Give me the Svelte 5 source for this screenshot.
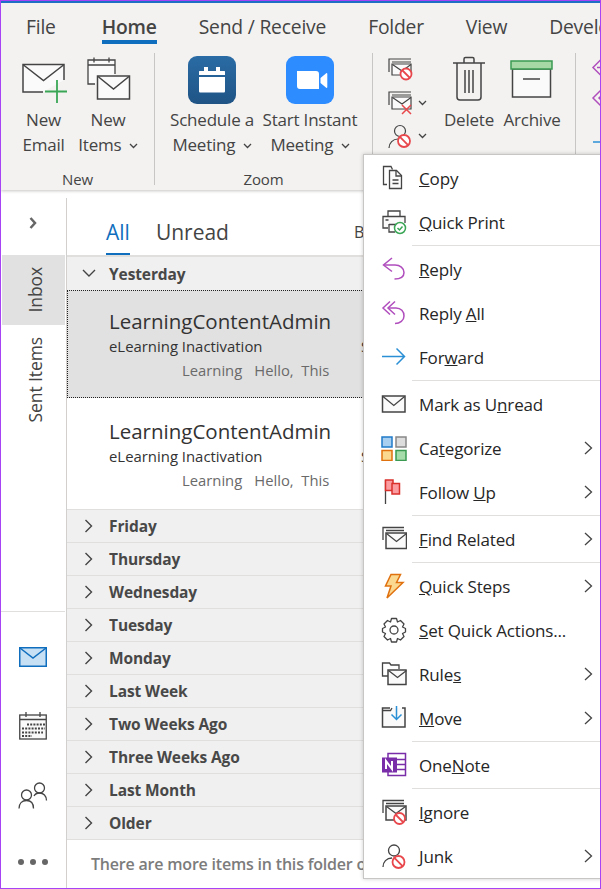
<script>
  const tabs = ['File', 'Home', 'Send / Receive', 'Folder', 'View', 'Developer'];

  const collapsed = ['Friday', 'Thursday', 'Wednesday', 'Tuesday', 'Monday', 'Last Week', 'Two Weeks Ago', 'Three Weeks Ago', 'Last Month', 'Older'];

  // pre / key / post: key is the underlined access key letter
  const menu = [
    [
      { icon: 'copy', pre: '', key: 'C', post: 'opy' },
      { icon: 'print', pre: '', key: 'Q', post: 'uick Print' }
    ],
    [
      { icon: 'reply', pre: '', key: 'R', post: 'eply' },
      { icon: 'replyall', pre: 'Reply ', key: 'A', post: 'll' },
      { icon: 'forward', pre: 'For', key: 'w', post: 'ard' }
    ],
    [
      { icon: 'mail', pre: 'Mark as U', key: 'n', post: 'read' },
      { icon: 'cat', pre: 'Ca', key: 't', post: 'egorize', more: true },
      { icon: 'flag', pre: 'Follow ', key: 'U', post: 'p', more: true }
    ],
    [{ icon: 'find', pre: '', key: 'F', post: 'ind Related', more: true }],
    [
      { icon: 'bolt', pre: '', key: 'Q', post: 'uick Steps', more: true },
      { icon: 'gear', pre: '', key: 'S', post: 'et Quick Actions...' },
      { icon: 'rules', pre: 'Rule', key: 's', post: '', more: true },
      { icon: 'move', pre: '', key: 'M', post: 'ove', more: true }
    ],
    [{ icon: 'onenote', pre: 'One', key: 'N', post: 'ote' }],
    [
      { icon: 'ignore', pre: '', key: 'I', post: 'gnore' },
      { icon: 'junk', pre: '', key: 'J', post: 'unk', more: true }
    ]
  ];
</script>

{#snippet noEntry(x, y, r)}
  <circle cx={x} cy={y} {r} fill="#fff" stroke="#e8474c" stroke-width="1.8" />
  <path d="M{x - r * 0.68} {y - r * 0.68}L{x + r * 0.68} {y + r * 0.68}" stroke="#e8474c" stroke-width="1.8" />
{/snippet}

{#snippet caret()}
  <svg class="caret" width="9" height="6" viewBox="0 0 9 6"><path d="M1 1l3.5 3.5L8 1" fill="none" stroke="#444" stroke-width="1.3" /></svg>
{/snippet}

{#snippet menuIcon(name)}
  <svg width="26" height="26" viewBox="0 0 26 26" fill="none" stroke="#444" stroke-width="1.3">
    {#if name === 'copy'}
      <path d="M6 19.500H2.500V1.500H10l1.500 3" />
      <path d="M8.500 5.500h7l5 5v13h-12z" fill="#fafafa" /><path d="M15 5.500v5.500h5.500M11.500 15h6M11.500 18.500h6" />
    {:else if name === 'print'}
      <path d="M7 7V2h12v5" /><path d="M7 19H2V7.500h22V14" fill="#fafafa" /><path d="M4.500 11h3M8 15.500h7M8 15v8h6" />
      <circle cx="19" cy="19" r="5.500" fill="#fff" stroke="#3aa655" stroke-width="1.500" /><path d="M16.500 19l2 2 3-3.500" stroke="#3aa655" stroke-width="1.500" />
    {:else if name === 'reply'}
      <path d="M11 2L2.500 9l8.500 6.500" stroke="#b04dbd" stroke-width="1.500" /><path d="M3 9h11c5 0 9 3 9 7.500S19 23 13.500 23" stroke="#b04dbd" stroke-width="1.500" />
    {:else if name === 'replyall'}
      <path d="M9 1.500L2 8l7 6.500" stroke="#b04dbd" stroke-width="1.500" /><path d="M14 1.500L7 8l7 6.500" stroke="#b04dbd" stroke-width="1.500" /><path d="M8 8h7c5 0 8 3.500 8 8s-4 7.500-9 7.500" stroke="#b04dbd" stroke-width="1.500" />
    {:else if name === 'forward'}
      <path d="M1 12.500h22M15.500 4.500l8 8-8 8" stroke="#2b8fd6" stroke-width="1.500" />
    {:else if name === 'mail'}
      <path d="M1.500 5h22.500v16H1.500z" fill="#fafafa" stroke-width="1.500" /><path d="M2 5.500l10.800 9 10.800-9" />
    {:else if name === 'cat'}
      <rect x="1" y="2" width="10" height="10" fill="#a9cff0" stroke="#1f7bc8" stroke-width="1.500" />
      <rect x="15" y="2" width="10" height="10" fill="#ddd" stroke="#888" stroke-width="1.500" />
      <rect x="1" y="15.500" width="10" height="10" fill="#fbd88f" stroke="#e0710f" stroke-width="1.500" />
      <rect x="15" y="15.500" width="10" height="10" fill="#a6dca9" stroke="#3a9a52" stroke-width="1.500" />
    {:else if name === 'flag'}
      <path d="M4.500 1v24" /><rect x="4.500" y="1" width="7.500" height="10.500" fill="#fb9ca0" stroke="#d9302c" stroke-width="1.500" />
      <rect x="11" y="4.500" width="7.500" height="10.500" fill="#fb9ca0" stroke="#d9302c" stroke-width="1.500" />
    {:else if name === 'find'}
      <path d="M2 14V1.500h21M5 4.500h18" /><path d="M5 7h20.500v15.500H5z" fill="#fafafa" stroke-width="1.500" /><path d="M5.500 7.500l10 8 10-8" />
    {:else if name === 'bolt'}
      <path d="M10 1.500h9.500l-4 8h6.500L6 25l4-12H4.500z" fill="#fbd88f" stroke="#e0710f" stroke-width="1.500" />
    {:else if name === 'gear'}
      <path d="M10.500 1.500h5l1 3.500 3-1.500 3.500 3.500-1.500 3 3 1.500v3.500l-3 1.500 1.500 3-3.500 3.500-3-1.500-1 3.500h-5l-1-3.500-3 1.500L3 19.500l1.500-3-3-1.500v-3.500l3-1.500L3 7l3.500-3.500 3 1.500z" stroke-linejoin="round" />
      <circle cx="13" cy="13" r="4" />
    {:else if name === 'rules'}
      <path d="M7 15H1.500V2h7l1.500 2h8v4" /><path d="M7 9h18v14.500H7z" fill="#fafafa" stroke-width="1.500" /><path d="M7.500 9.500l9 7 9-7" />
    {:else if name === 'move'}
      <path d="M9 3H1.500v19h22.500V3h-3" fill="#fafafa" stroke-width="1.500" /><path d="M1.500 5.500h8l1.500-2.500" />
      <path d="M15.500 1v13M10.500 9.500l5 5 5-5" stroke="#2b8fd6" stroke-width="1.500" />
    {:else if name === 'onenote'}
      <path d="M7 1.500h17.500v22H7z" fill="#fff" stroke="#7a2da8" stroke-width="1.500" /><path d="M16 7.500h9M16 12.500h9M16 17.500h9" stroke="#7a2da8" stroke-width="1.500" />
      <rect x="1" y="5.500" width="15" height="15" fill="#7a2da8" stroke="none" />
      <path d="M5 17V9l6 8V9" stroke="#fff" stroke-width="2" />
    {:else if name === 'ignore'}
      <path d="M2 14V1.500h21M5 4.500h18" /><path d="M5 7h20v14H5z" fill="#fafafa" stroke-width="1.500" /><path d="M5.500 7.500l9.500 7 9.500-7" />
      {@render noEntry(18.500, 19.500, 5.500)}
    {:else if name === 'junk'}
      <circle cx="13" cy="7.500" r="5.500" /><path d="M2 24c0-5 3.500-9 9-9" />
      {@render noEntry(17.500, 19, 6)}
    {/if}
  </svg>
{/snippet}

<div class="window">
  <header class="ribbon">
    <nav class="tabs">
      {#each tabs as tab}
        <span class="tab" class:active={tab === 'Home'}>{tab}</span>
      {/each}
    </nav>

    <div class="groups">
      <section class="group g-new">
        <div class="tools">
          <div class="tool t-new">
            <svg width="46" height="48" viewBox="0 0 46 48" fill="none" stroke="#444" stroke-width="1.500">
              <path d="M43 24V8.500H2v27.500h20" fill="#fafafa" />
              <path d="M2.500 9l20 15.500L42.500 9" />
              <path d="M36 24v23M24 35.500h23" stroke="#3aa655" stroke-width="1.800" />
            </svg>
            <span>New<br />Email</span>
          </div>
          <div class="tool t-items">
            <svg width="46" height="48" viewBox="0 0 46 48" fill="none" stroke="#444" stroke-width="1.300">
              <path d="M10 28H3V4h27v14" fill="#fafafa" /><path d="M3 9h27M9 1.500v5M24 1.500v5" />
              <path d="M12.500 20h32v23h-32z" fill="#fafafa" stroke-width="1.500" /><path d="M13 20.500L28.500 33 44 20.500" stroke-width="1.500" />
            </svg>
            <span>New<br />Items {@render caret()}</span>
          </div>
        </div>
        <div class="label">New</div>
      </section>

      <section class="group g-zoom">
        <div class="tools">
          <div class="tool t-sched">
            <svg width="48" height="48" viewBox="0 0 48 48">
              <defs><linearGradient id="sq" x1="0" y1="0" x2="0" y2="1"><stop offset="0" stop-color="#2a6ca5" /><stop offset="1" stop-color="#1f5485" /></linearGradient></defs>
              <rect width="48" height="48" rx="9" fill="url(#sq)" />
              <path d="M12 15h4v-4h4v4h8v-4h4v4h4c1 0 1 .5 1 1v3H11v-3c0-.5 0-1 1-1zM11 21h26v14c0 1-.5 1.500-1.500 1.500h-23c-1 0-1.500-.5-1.500-1.500z" fill="#fff" />
            </svg>
            <span>Schedule a<br />Meeting {@render caret()}</span>
          </div>
          <div class="tool t-start">
            <svg width="48" height="48" viewBox="0 0 48 48">
              <rect width="48" height="48" rx="9" fill="#2d8cff" />
              <path d="M11 15h19c2 0 3 1 3 3v15H14c-2 0-3-1-3-3zM34.500 22l6-5c.5 0 .8.3.8.8v13.400c0 .5-.3.8-.8.8l-6-5z" fill="#fff" />
            </svg>
            <span>Start Instant<br />Meeting {@render caret()}</span>
          </div>
        </div>
        <div class="label">Zoom</div>
      </section>

      <section class="group g-delete">
        <div class="tools">
          <div class="stack">
            <div class="mini">
              <svg width="26" height="24" viewBox="0 0 26 24" fill="none" stroke="#444" stroke-width="1.200">
                <path d="M1 14V1h22M4 4h19" /><path d="M4 6h19v11H4z" fill="#fafafa" /><path d="M4.500 6.500L14 13l9-6.500" />
                {@render noEntry(18, 16, 5.500)}
              </svg>
            </div>
            <div class="mini">
              <svg width="26" height="24" viewBox="0 0 26 24" fill="none" stroke="#444" stroke-width="1.200">
                <path d="M1 14V1h22M4 4h19" /><path d="M4 6h19v12H4z" fill="#fafafa" /><path d="M4.500 6.500L14 13l9-6.500" />
                <path d="M14 14l9 9M23 14l-9 9" stroke="#e8474c" stroke-width="1.500" />
              </svg>
              {@render caret()}
            </div>
            <div class="mini">
              <svg width="26" height="24" viewBox="0 0 26 24" fill="none" stroke="#444" stroke-width="1.200">
                <circle cx="12" cy="7" r="5.500" /><path d="M1 24c0-5 4-9 9-9" />
                {@render noEntry(16, 17, 6)}
              </svg>
              {@render caret()}
            </div>
          </div>
          <div class="tool t-delete">
            <svg width="34" height="48" viewBox="0 0 34 48" fill="none" stroke="#444" stroke-width="1.500">
              <path d="M1 7h32M12 7V3c0-1 .5-1.500 1.500-1.500h7c1 0 1.500.5 1.500 1.500v4" />
              <path d="M5 7v34c0 2 1 3 3 3h18c2 0 3-1 3-3V7M13 14v23M17 14v23M21 14v23" />
            </svg>
            <span>Delete</span>
          </div>
          <div class="tool t-archive">
            <svg width="44" height="48" viewBox="0 0 44 48" fill="none" stroke-width="1.500">
              <rect x="2.500" y="13" width="38" height="28" fill="#fafafa" stroke="#444" />
              <rect x="1" y="5" width="41" height="8" fill="#a5d8a4" stroke="#3a9a52" />
              <path d="M13 23h17" stroke="#444" />
            </svg>
            <span>Archive</span>
          </div>
        </div>
      </section>

      <section class="group g-respond">
        <svg width="20" height="110" viewBox="0 0 20 110" fill="none" stroke="#b04dbd" stroke-width="1.500">
          <path d="M10 5.500L2 13.500l8 8M6 13.500h14M10 36L2 44l8 8M16 36l-8 8 8 8" />
          <path d="M2 88h18" stroke="#2b8fd6" />
        </svg>
      </section>
    </div>
  </header>

  <main class="content">
    <aside class="rail">
      <div class="expand">
        <svg width="10" height="12" viewBox="0 0 10 12"><path d="M1.500 1l4.500 5-4.500 5" fill="none" stroke="#666" stroke-width="2.500" /></svg>
      </div>
      <div class="folder current"><span>Inbox</span></div>
      <div class="folder"><span>Sent Items</span></div>

      <div class="apps">
        <div class="app">
          <svg width="28" height="20" viewBox="0 0 28 20" stroke="#106ebe" stroke-width="1.500">
            <rect x=".75" y=".75" width="26.500" height="18.500" fill="#c7e0f4" /><path d="M1 1l13 10L27 1" fill="none" />
          </svg>
        </div>
        <div class="app">
          <svg width="28" height="28" viewBox="0 0 28 28" fill="none" stroke="#444" stroke-width="1.300">
            <rect x=".75" y="3" width="26.500" height="24" fill="#fafafa" /><path d="M1 7.500h26M7 0v5M21 0v5" />
            <path d="M8 12.500h18M3 16.500h23M3 20.500h21M3 24h10" stroke-width="2" stroke-dasharray="2 1.200" />
          </svg>
        </div>
        <div class="app">
          <svg width="30" height="28" viewBox="0 0 30 28" fill="none" stroke="#444" stroke-width="1.300">
            <circle cx="8.500" cy="14" r="5" /><path d="M1 27.500c0-5 3-8 7.500-8s7 3 7 8" />
            <circle cx="21.500" cy="7" r="5" /><path d="M16 15c1-2 3-3 5.500-3 4 0 7 3 7 7.500" />
          </svg>
        </div>
        <div class="app dots"><i></i><i></i><i></i></div>
      </div>
    </aside>

    <section class="list">
      <div class="filter">
        <span class="f-tab on">All</span>
        <span class="f-tab">Unread</span>
        <span class="sort">By Date</span>
      </div>

      <div class="group-row open">
        <svg width="14" height="9" viewBox="0 0 14 9"><path d="M1 1l6 6 6-6" fill="none" stroke="#444" stroke-width="1.400" /></svg>
        <b>Yesterday</b>
      </div>

      {#each [true, false] as selected}
        <article class="mail" class:selected>
          <div class="sender">LearningContentAdmin</div>
          <div class="subject">eLearning Inactivation<em>Sat</em></div>
          <div class="preview"><span>Learning</span><span>Hello,&nbsp; This</span></div>
        </article>
      {/each}

      {#each collapsed as name}
        <div class="group-row">
          <svg width="9" height="14" viewBox="0 0 9 14"><path d="M1 1l6 6-6 6" fill="none" stroke="#444" stroke-width="1.400" /></svg>
          <b>{name}</b>
        </div>
      {/each}

      <div class="more-items">There are more items in this folder on the server</div>
    </section>
  </main>

  <div class="context">
    {#each menu as section, i}
      {#if i > 0}<div class="sep"></div>{/if}
      {#each section as item}
        <div class="item">
          <span class="ico">{@render menuIcon(item.icon)}</span>
          <span class="txt">{item.pre}<u>{item.key}</u>{item.post}</span>
          {#if item.more}
            <svg class="arrow" width="9" height="14" viewBox="0 0 9 14"><path d="M1 1l6.500 6L1 13" fill="none" stroke="#444" stroke-width="1.300" /></svg>
          {/if}
        </div>
      {/each}
    {/each}
  </div>
</div>

<style>
  :global(body) {
    background: #fff;
  }

  .window {
    position: relative;
    box-sizing: border-box;
    width: 601px;
    height: 889px;
    overflow: hidden;
    display: flex;
    flex-direction: column;
    border: 1px solid #a742f5;
    font-family: "Open Sans", "Noto Sans", sans-serif;
    color: #444;
  }

  .ribbon {
    flex: none;
    box-sizing: border-box;
    height: 189px;
    border-top: 2px solid #1f6fc4;
    background: #f3f2f1;
    box-shadow: 0 1px 3px #c8c6c4;
    z-index: 1;
    display: flex;
    flex-direction: column;
  }

  .tabs {
    display: flex;
    flex: none;
    height: 41px;
    padding-left: 25px;
    gap: 42px;
    white-space: nowrap;
    font-size: 19.300px;
    letter-spacing: -0.2px;
  }

  .tab {
    height: 37px;
    line-height: 48px;
    border-bottom: 4px solid transparent;
  }

  .tab.active {
    margin-left: 4px;
    font-weight: 600;
    border-bottom-color: #106ebe;
  }

  .groups {
    display: flex;
    flex: none;
    height: 132px;
    margin-top: 9px;
  }

  .group {
    flex: none;
    display: flex;
    flex-direction: column;
    border-right: 1px solid #c8c6c4;
  }

  .g-new { width: 153px; }
  .g-zoom { width: 217px; }
  .g-delete { width: 202px; }
  .g-respond { width: 24px; border: none; padding: 1px 0 0 15px; box-sizing: border-box; }

  .tools {
    display: flex;
    flex: 1;
  }

  .tool {
    display: flex;
    flex-direction: column;
    align-items: center;
    font-size: 17px;
    line-height: 25px;
    text-align: center;
    white-space: nowrap;
    letter-spacing: -0.2px;
  }

  .tool svg:first-child {
    flex: none;
    margin-bottom: 3px;
    margin-top: 3px;
  }

  .t-new { width: 65px; margin-left: 10px; }
  .t-items { width: 64px; }
  .t-sched { width: 98px; margin-left: 8px; }
  .t-start { width: 98px; }
  .t-delete { width: 62px; margin-left: 3px; }
  .t-archive { width: 64px; }

  .caret {
    margin-left: 3px;
    vertical-align: 2px;
  }

  .stack {
    width: 62px;
    box-sizing: border-box;
    padding: 5px 0 0 15px;
    display: flex;
    flex-direction: column;
    gap: 9px;
  }

  .mini {
    display: flex;
    align-items: center;
    gap: 1px;
    height: 24px;
  }

  .label {
    text-align: center;
    font-size: 15px;
    line-height: 20px;
    margin-bottom: -4px;
    letter-spacing: -0.1px;
  }

  .content {
    flex: 1;
    min-height: 0;
    display: flex;
    background: #fff;
  }

  .rail {
    flex: none;
    width: 65px;
    margin-top: 8px;
    border-right: 1px solid #d2d0ce;
    display: flex;
    flex-direction: column;
  }

  .expand {
    flex: none;
    height: 57px;
    box-sizing: border-box;
    padding: 0 0 8px 1px;
    display: flex;
    align-items: center;
    justify-content: center;
  }

  .folder {
    display: flex;
    justify-content: center;
    margin: 0 1px;
    padding: 12px 0 12px 2px;
    font-size: 17.500px;
    color: #444;
    letter-spacing: -0.1px;
  }

  .folder span {
    writing-mode: vertical-rl;
    transform: rotate(180deg);
  }

  .folder.current {
    background: #e1e1e1;
  }

  .apps {
    margin-top: auto;
    height: 277px;
    box-sizing: border-box;
    padding-top: 10px;
    border-top: 1px solid #e1dfdd;
    display: flex;
    flex-direction: column;
    margin-right: 1px;
  }

  .app {
    flex: none;
    height: 69px;
    display: flex;
    align-items: center;
    justify-content: center;
  }

  .dots {
    height: 65px;
    gap: 6px;
  }

  .dots i {
    width: 6px;
    height: 6px;
    border-radius: 50%;
    background: #666;
  }

  .list {
    flex: 1;
    min-width: 0;
    overflow: hidden;
    white-space: nowrap;
  }

  .filter {
    display: flex;
    align-items: flex-start;
    height: 67px;
    box-sizing: border-box;
    padding: 27px 0 0 39px;
    gap: 26px;
    font-size: 21px;
    border-bottom: 2px solid #e1dfdd;
  }

  .f-tab {
    height: 38px;
    line-height: 30px;
    box-sizing: border-box;
  }

  .f-tab.on {
    color: #106ebe;
    border-bottom: 2px solid #106ebe;
  }

  .sort {
    margin-left: 99px;
    font-size: 16px;
    line-height: 30px;
  }

  .group-row {
    display: flex;
    align-items: center;
    height: 33px;
    box-sizing: border-box;
    background: #f0f0f0;
    border-bottom: 1px solid #e1dfdd;
    padding-left: 15px;
    font-size: 15.500px;
  }

  .group-row svg {
    flex: none;
    width: 14px;
  }

  .group-row b {
    margin-left: 13px;
    font-weight: 700;
    color: #484848;
    letter-spacing: -0.1px;
  }

  .group-row.open {
    border-bottom: none;
  }

  .mail {
    box-sizing: border-box;
    height: 111px;
    padding: 19px 0 0 42px;
    color: #333;
  }

  .mail + .group-row {
    border-top: 1px solid #e1dfdd;
    height: 34px;
  }

  .mail.selected {
    height: 108px;
    background: #e1e1e1;
    outline: 1px dotted #222;
    outline-offset: -1px;
    padding-top: 17px;
  }

  .sender {
    font-size: 20.500px;
    line-height: 28px;
  }

  .subject {
    font-size: 14.900px;
    line-height: 22px;
    width: 300px;
    position: relative;
  }

  .subject em {
    position: absolute;
    left: 252px;
    font-style: normal;
  }

  .preview {
    display: flex;
    gap: 12px;
    font-size: 14.800px;
    line-height: 26px;
    color: #6a6a6a;
    padding-left: 73px;
  }

  .more-items {
    padding: 13px 0 0 24px;
    font-size: 16px;
    font-weight: 600;
    letter-spacing: -0.2px;
    color: #7c7c7c;
  }

  .context {
    position: absolute;
    left: 362px;
    top: 153px;
    width: 245px;
    padding-top: 1px;
    background: #fff;
    border: 1px solid #c8c6c4;
    box-shadow: 0 0 4px rgba(0, 0, 0, 0.2);
    z-index: 2;
  }

  .item {
    display: flex;
    align-items: center;
    height: 44px;
    color: #262626;
    font-size: 17px;
    white-space: nowrap;
    letter-spacing: -0.15px;
  }

  .ico {
    flex: none;
    width: 55px;
    padding-left: 17px;
    box-sizing: border-box;
    display: flex;
  }

  .arrow {
    position: absolute;
    left: 220px;
  }

  .sep {
    height: 1px;
    margin: 1px 0 1px 48px;
    background: #e1dfdd;
  }
</style>
